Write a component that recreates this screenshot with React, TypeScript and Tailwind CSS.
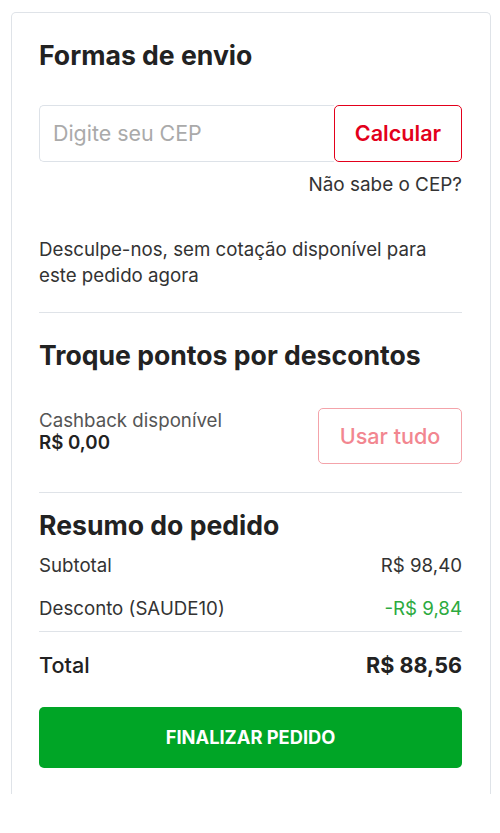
export default function App() {
  return (
    <div
      className="min-h-[833px] bg-white pt-3 pl-[11px]"
      style={{ fontFamily: "Inter, 'Noto Sans', sans-serif" }}
    >
      <div className="h-[782px] w-[480px] overflow-hidden rounded-t-[5px] border border-b-0 border-[#dfe3e8] pt-[26px] pl-[27px] pr-[28px] text-[#222]">
        {/* Formas de envio */}
        <h2 className="text-[26.6px] font-bold leading-[32px] text-[#222]">Formas de envio</h2>

        <div className="mt-[34px] flex h-[57px]">
          <input
            type="text"
            placeholder="Digite seu CEP"
            className="min-w-0 flex-1 rounded-l-[5px] border border-r-0 border-[#dde2e8] px-[13px] text-[21.4px] text-[#222] outline-none placeholder:text-[#aaaaaa]"
          />
          <button className="w-[128px] rounded-[5px] border border-[#e3001b] text-[21.6px] font-semibold text-[#e3001b]">
            Calcular
          </button>
        </div>

        <p className="mt-[11px] text-right text-[18.9px] leading-[24px] text-[#333]">Não sabe o CEP?</p>

        <p className="mt-[40px] text-[18.7px] leading-[26px] text-[#333]">
          Desculpe-nos, sem cotação disponível para este pedido agora
        </p>

        <div className="mt-[23px] border-t border-[#dfe3e8]" />

        {/* Troque pontos */}
        <h2 className="mt-[26px] text-[26.6px] font-bold leading-[32px] text-[#222]">
          Troque pontos por descontos
        </h2>

        <div className="mt-[37px] flex items-start justify-between">
          <div className="mt-[2px] text-[18.7px] leading-[22px]">
            <p className="text-[#555]">Cashback disponível</p>
            <p className="font-semibold text-[#222]">R$ 0,00</p>
          </div>
          <button className="h-[56px] w-[144px] rounded-[5px] border border-[#f4a3aa] text-[21.6px] font-medium text-[#f28690]">
            Usar tudo
          </button>
        </div>

        <div className="mt-[28px] border-t border-[#dfe3e8]" />

        {/* Resumo */}
        <h2 className="mt-[16px] text-[26.6px] font-bold leading-[32px] text-[#222]">Resumo do pedido</h2>

        <div className="mt-[12px] flex flex-col gap-[17px] text-[18.7px] leading-[26px]">
          <div className="flex justify-between">
            <span className="text-[#333]">Subtotal</span>
            <span className="text-[#333]">R$ 98,40</span>
          </div>
          <div className="flex justify-between">
            <span className="text-[#333]">Desconto (SAUDE10)</span>
            <span className="text-[#2daa3f]">-R$ 9,84</span>
          </div>
        </div>

        <div className="mt-[9px] border-t border-[#dfe3e8]" />

        <div className="mt-[18px] flex justify-between text-[21.6px] leading-[30px]">
          <span className="font-medium text-[#222]">Total</span>
          <span className="font-bold text-[#222]">R$ 88,56</span>
        </div>

        <button className="mt-[27px] h-[61px] w-full rounded-[5px] bg-[#00a526] text-[18.3px] font-bold text-white">
          FINALIZAR PEDIDO
        </button>
      </div>
    </div>
  );
}
